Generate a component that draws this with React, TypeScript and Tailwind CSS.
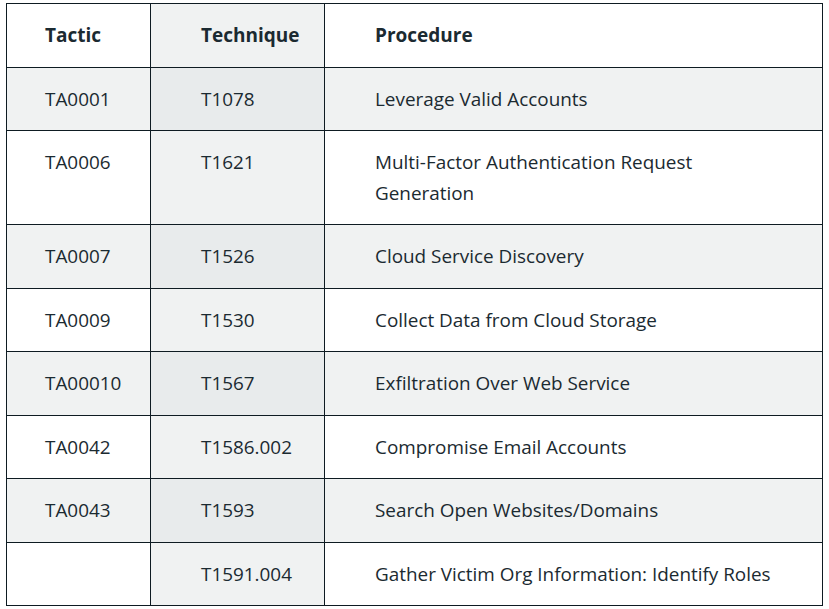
const rows: [string, string, string][] = [
  ['TA0001', 'T1078', 'Leverage Valid Accounts'],
  ['TA0006', 'T1621', 'Multi-Factor Authentication Request Generation'],
  ['TA0007', 'T1526', 'Cloud Service Discovery'],
  ['TA0009', 'T1530', 'Collect Data from Cloud Storage'],
  ['TA00010', 'T1567', 'Exfiltration Over Web Service'],
  ['TA0042', 'T1586.002', 'Compromise Email Accounts'],
  ['TA0043', 'T1593', 'Search Open Websites/Domains'],
  ['', 'T1591.004', 'Gather Victim Org Information: Identify Roles'],
];

export default function App() {
  return (
    <div className="bg-white w-[829px] h-[609px] pt-[3px] pl-[6px] font-['Open_Sans',sans-serif] text-[#1b2a31]">
      <table className="w-[817px] border-collapse border border-[#0e1b22] text-[18.9px] leading-[30.5px]">
        <colgroup>
          <col className="w-[144px]" />
          <col className="w-[174px]" />
          <col />
        </colgroup>
        <thead>
          <tr className="bg-white text-[19px]">
            <th className="border border-[#0e1b22] text-left font-bold pl-[38px] py-4">Tactic</th>
            <th className="border border-[#0e1b22] text-left font-bold pl-[50px] py-4 bg-[#f0f2f2]">Technique</th>
            <th className="border border-[#0e1b22] text-left font-bold pl-[50px] py-4">Procedure</th>
          </tr>
        </thead>
        <tbody>
          {rows.map(([tactic, tech, proc], i) => {
            const striped = i % 2 === 0;
            return (
              <tr key={tech} className={striped ? 'bg-[#f0f2f2]' : 'bg-white'}>
                <td className="border border-[#0e1b22] align-top pl-[38px] py-4">{tactic}</td>
                <td className={`border border-[#0e1b22] align-top pl-[50px] py-4 ${striped ? 'bg-[#e8ebec]' : 'bg-[#f0f2f2]'}`}>
                  {tech}
                </td>
                <td className="border border-[#0e1b22] align-top pl-[50px] pr-[40px] py-4">{proc}</td>
              </tr>
            );
          })}
        </tbody>
      </table>
    </div>
  );
}
